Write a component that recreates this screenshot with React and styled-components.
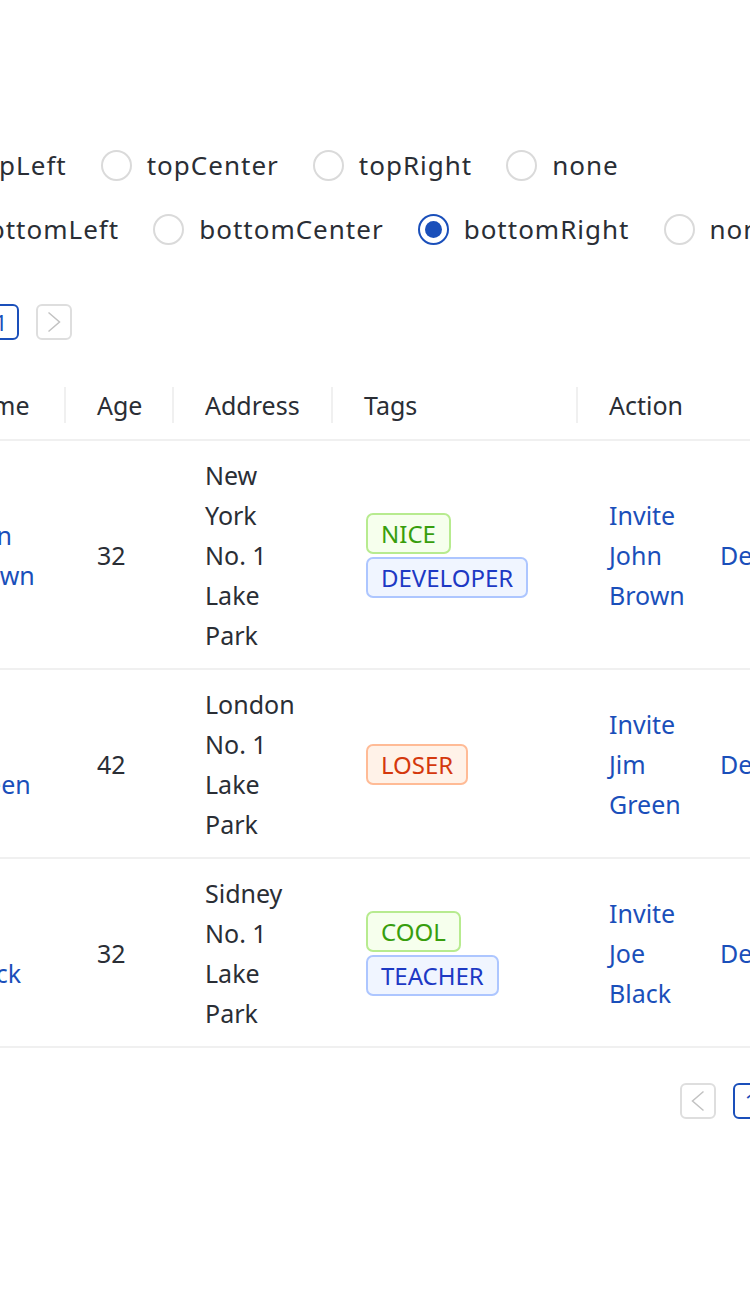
import React from 'react';
import styled, { createGlobalStyle } from 'styled-components';

const BLUE = '#1a4fba';

const tagColors = {
  green: { fg: '#389e0d', bg: '#f6ffed', border: '#b7eb8f' },
  geekblue: { fg: '#1d39c4', bg: '#f0f5ff', border: '#adc6ff' },
  volcano: { fg: '#d4380d', bg: '#fff2e8', border: '#ffbb96' },
};

const topOptions = ['topLeft', 'topCenter', 'topRight', 'none'];
const bottomOptions = ['bottomLeft', 'bottomCenter', 'bottomRight', 'none'];

const data = [
  { key: '1', name: 'John Brown', age: 32, address: 'New York No. 1 Lake Park', tags: ['nice', 'developer'] },
  { key: '2', name: 'Jim Green', age: 42, address: 'London No. 1 Lake Park', tags: ['loser'] },
  { key: '3', name: 'Joe Black', age: 32, address: 'Sidney No. 1 Lake Park', tags: ['cool', 'teacher'] },
];

function tagColor(tag) {
  if (tag === 'loser') return 'volcano';
  return tag.length > 5 ? 'geekblue' : 'green';
}

function Chevron({ dir }) {
  return (
    <svg width="14" height="22" viewBox="0 0 14 22" fill="none">
      {dir === 'left' ? (
        <path d="M12.5 1.5 L1.5 11 L12.5 20.5" stroke="#c2c2c2" strokeWidth="1.5" />
      ) : (
        <path d="M1.5 1.5 L12.5 11 L1.5 20.5" stroke="#c2c2c2" strokeWidth="1.5" />
      )}
    </svg>
  );
}

function Pager({ align }) {
  return (
    <PagerRow $align={align}>
      <PageItem>
        <Chevron dir="left" />
      </PageItem>
      <PageItem $active>1</PageItem>
      <PageItem>
        <Chevron dir="right" />
      </PageItem>
    </PagerRow>
  );
}

function RadioRow({ options, value }) {
  return (
    <RadioGroup>
      {options.map((o) => (
        <RadioLabel key={o}>
          <RadioCircle $checked={o === value} />
          <span>{o}</span>
        </RadioLabel>
      ))}
    </RadioGroup>
  );
}

export default function App() {
  return (
    <>
      <GlobalStyle />
      <Page>
        <RadioRow options={topOptions} value="topLeft" />
        <RadioRow options={bottomOptions} value="bottomRight" />
        <Pager align="flex-start" />
        <Table>
          <colgroup>
            <col style={{ width: 138 }} />
            <col style={{ width: 108 }} />
            <col style={{ width: 159 }} />
            <col style={{ width: 245 }} />
            <col style={{ width: 244 }} />
          </colgroup>
          <thead>
            <tr>
              <HeadCell>Name</HeadCell>
              <HeadCell>Age</HeadCell>
              <HeadCell>Address</HeadCell>
              <HeadCell>Tags</HeadCell>
              <HeadCell $last>Action</HeadCell>
            </tr>
          </thead>
          <tbody>
            {data.map((r) => (
              <tr key={r.key}>
                <Cell>
                  <Link>{r.name}</Link>
                </Cell>
                <Cell>{r.age}</Cell>
                <Cell>{r.address}</Cell>
                <Cell>
                  <TagList>
                    {r.tags.map((t) => (
                      <Tag key={t} $color={tagColor(t)}>
                        {t.toUpperCase()}
                      </Tag>
                    ))}
                  </TagList>
                </Cell>
                <Cell>
                  <Actions>
                    <InviteLink>Invite {r.name}</InviteLink>
                    <Link>Delete</Link>
                  </Actions>
                </Cell>
              </tr>
            ))}
          </tbody>
        </Table>
        <Pager align="flex-end" />
      </Page>
    </>
  );
}

const GlobalStyle = createGlobalStyle`
  body {
    margin: 0;
    overflow: hidden;
    background: #fff;
    font-family: "Noto Sans", "Open Sans", sans-serif;
    color: #2a2e35;
  }
`;

const Page = styled.div`
  width: 894px;
  margin-left: -72px;
  padding-top: 145px;
  font-size: 25px;
  line-height: 40px;
`;

const RadioGroup = styled.div`
  display: flex;
  align-items: center;
  gap: 34px;
  margin-bottom: 24px;
  margin-left: -2px;
  white-space: nowrap;
  font-size: 26px;
  letter-spacing: 1px;
`;

const RadioLabel = styled.label`
  display: inline-flex;
  align-items: center;
  gap: 15px;
`;

const RadioCircle = styled.span`
  box-sizing: border-box;
  width: 31px;
  height: 31px;
  border-radius: 50%;
  border: 2px solid ${(p) => (p.$checked ? BLUE : '#dadada')};
  display: inline-flex;
  align-items: center;
  justify-content: center;
  &::after {
    content: '';
    width: 17px;
    height: 17px;
    border-radius: 50%;
    background: ${BLUE};
    display: ${(p) => (p.$checked ? 'block' : 'none')};
  }
`;

const PagerRow = styled.div`
  display: flex;
  justify-content: ${(p) => p.$align};
  gap: 17px;
  margin: ${(p) => (p.$align === 'flex-start' ? '55px 0 30px 2px' : '35px 0 0')};
`;

const PageItem = styled.div`
  box-sizing: border-box;
  width: 36px;
  height: 36px;
  border-radius: 6px;
  border: ${(p) => (p.$active ? `2px solid ${BLUE}` : '2px solid #dedede')};
  color: ${BLUE};
  display: flex;
  align-items: center;
  justify-content: center;
  font-size: 22px;
`;

const Table = styled.table`
  width: 894px;
  table-layout: fixed;
  border-collapse: collapse;
  text-align: left;
`;

const HeadCell = styled.th`
  position: relative;
  font-weight: 400;
  padding: 15px 31px 14px;
  border-bottom: 2px solid #f0f0f0;
  &::after {
    content: '';
    position: absolute;
    right: 0;
    top: 50%;
    transform: translateY(-50%);
    width: 2px;
    height: 36px;
    background: #f0f0f0;
    display: ${(p) => (p.$last ? 'none' : 'block')};
  }
`;

const Cell = styled.td`
  padding: 14px 31px 13px;
  border-bottom: 2px solid #f0f0f0;
  vertical-align: middle;
`;

const Link = styled.a`
  color: ${BLUE};
  cursor: pointer;
  flex: none;
`;

const InviteLink = styled(Link)`
  width: 97px;
`;

const Actions = styled.div`
  display: flex;
  align-items: center;
  gap: 14px;
`;

const TagList = styled.div`
  display: flex;
  flex-wrap: wrap;
  gap: 3px 14px;
  padding-left: 2px;
`;

const Tag = styled.span`
  display: inline-block;
  padding: 0 13px;
  font-size: 24px;
  line-height: 37px;
  border-radius: 7px;
  border: 2px solid ${(p) => tagColors[p.$color].border};
  background: ${(p) => tagColors[p.$color].bg};
  color: ${(p) => tagColors[p.$color].fg};
`;
